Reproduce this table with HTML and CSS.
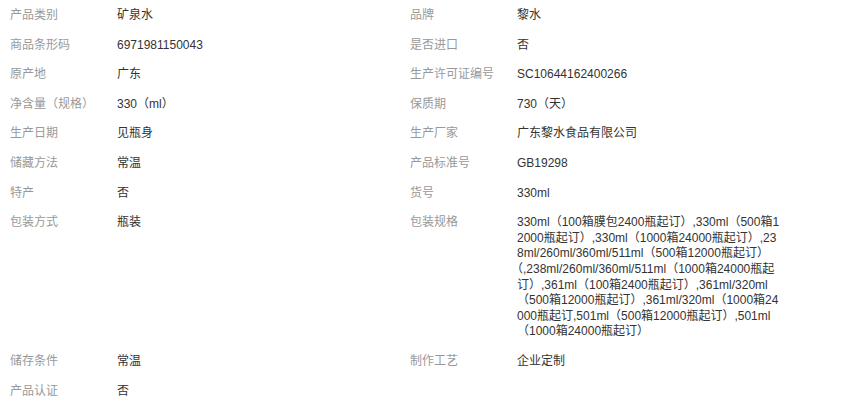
FILE: index.html
```html
<!DOCTYPE html>
<html lang="zh-CN">
<head>
<meta charset="utf-8">
<title>商品参数</title>
<link rel="stylesheet" href="styles.css">
</head>
<body>
<div class="params">
  <div class="row">
    <div class="label">产品类别</div><div class="value">矿泉水</div>
    <div class="label">品牌</div><div class="value value-right">黎水</div>
  </div>
  <div class="row">
    <div class="label">商品条形码</div><div class="value">6971981150043</div>
    <div class="label">是否进口</div><div class="value value-right">否</div>
  </div>
  <div class="row">
    <div class="label">原产地</div><div class="value">广东</div>
    <div class="label">生产许可证编号</div><div class="value value-right">SC10644162400266</div>
  </div>
  <div class="row">
    <div class="label">净含量（规格）</div><div class="value">330（ml）</div>
    <div class="label">保质期</div><div class="value value-right">730（天）</div>
  </div>
  <div class="row">
    <div class="label">生产日期</div><div class="value">见瓶身</div>
    <div class="label">生产厂家</div><div class="value value-right">广东黎水食品有限公司</div>
  </div>
  <div class="row">
    <div class="label">储藏方法</div><div class="value">常温</div>
    <div class="label">产品标准号</div><div class="value value-right">GB19298</div>
  </div>
  <div class="row">
    <div class="label">特产</div><div class="value">否</div>
    <div class="label">货号</div><div class="value value-right">330ml</div>
  </div>
  <div class="row">
    <div class="label">包装方式</div><div class="value">瓶装</div>
    <div class="label">包装规格</div><div class="value value-right">330ml（100箱膜包2400瓶起订）,330ml（500箱12000瓶起订）,330ml（1000箱24000瓶起订）,238ml/260ml/360ml/511ml（500箱12000瓶起订）<span class="nb">（,238ml</span>/260ml/360ml/511ml（1000箱24000瓶起订）,361ml（100箱2400瓶起订）,361ml/320ml（500箱12000瓶起订）,361ml/320ml（1000箱24000瓶起订,501ml（500箱12000瓶起订）,501ml（1000箱24000瓶起订）</div>
  </div>
  <div class="row">
    <div class="label">储存条件</div><div class="value">常温</div>
    <div class="label">制作工艺</div><div class="value value-right">企业定制</div>
  </div>
  <div class="row">
    <div class="label">产品认证</div><div class="value">否</div>
  </div>
</div>
</body>
</html>
```

FILE: styles.css
```css
html, body {
  margin: 0;
  padding: 0;
  background: #fff;
}
body {
  font-family: "Liberation Sans", "Noto Sans CJK SC", sans-serif;
  font-size: 12px;
  line-height: 1.3;
  color: #333;
}
.params {
  padding-top: 1px;
  padding-left: 10px;
}
.row {
  display: flex;
  align-items: flex-start;
  padding: 7px 0;
}
.label {
  width: 107px;
  flex: none;
  color: #999;
  white-space: nowrap;
}
.value {
  width: 293px;
  flex: none;
  color: #333;
  word-break: break-all;
}
.value-right {
  width: 265px;
}
.nb {
  white-space: nowrap;
}
```
